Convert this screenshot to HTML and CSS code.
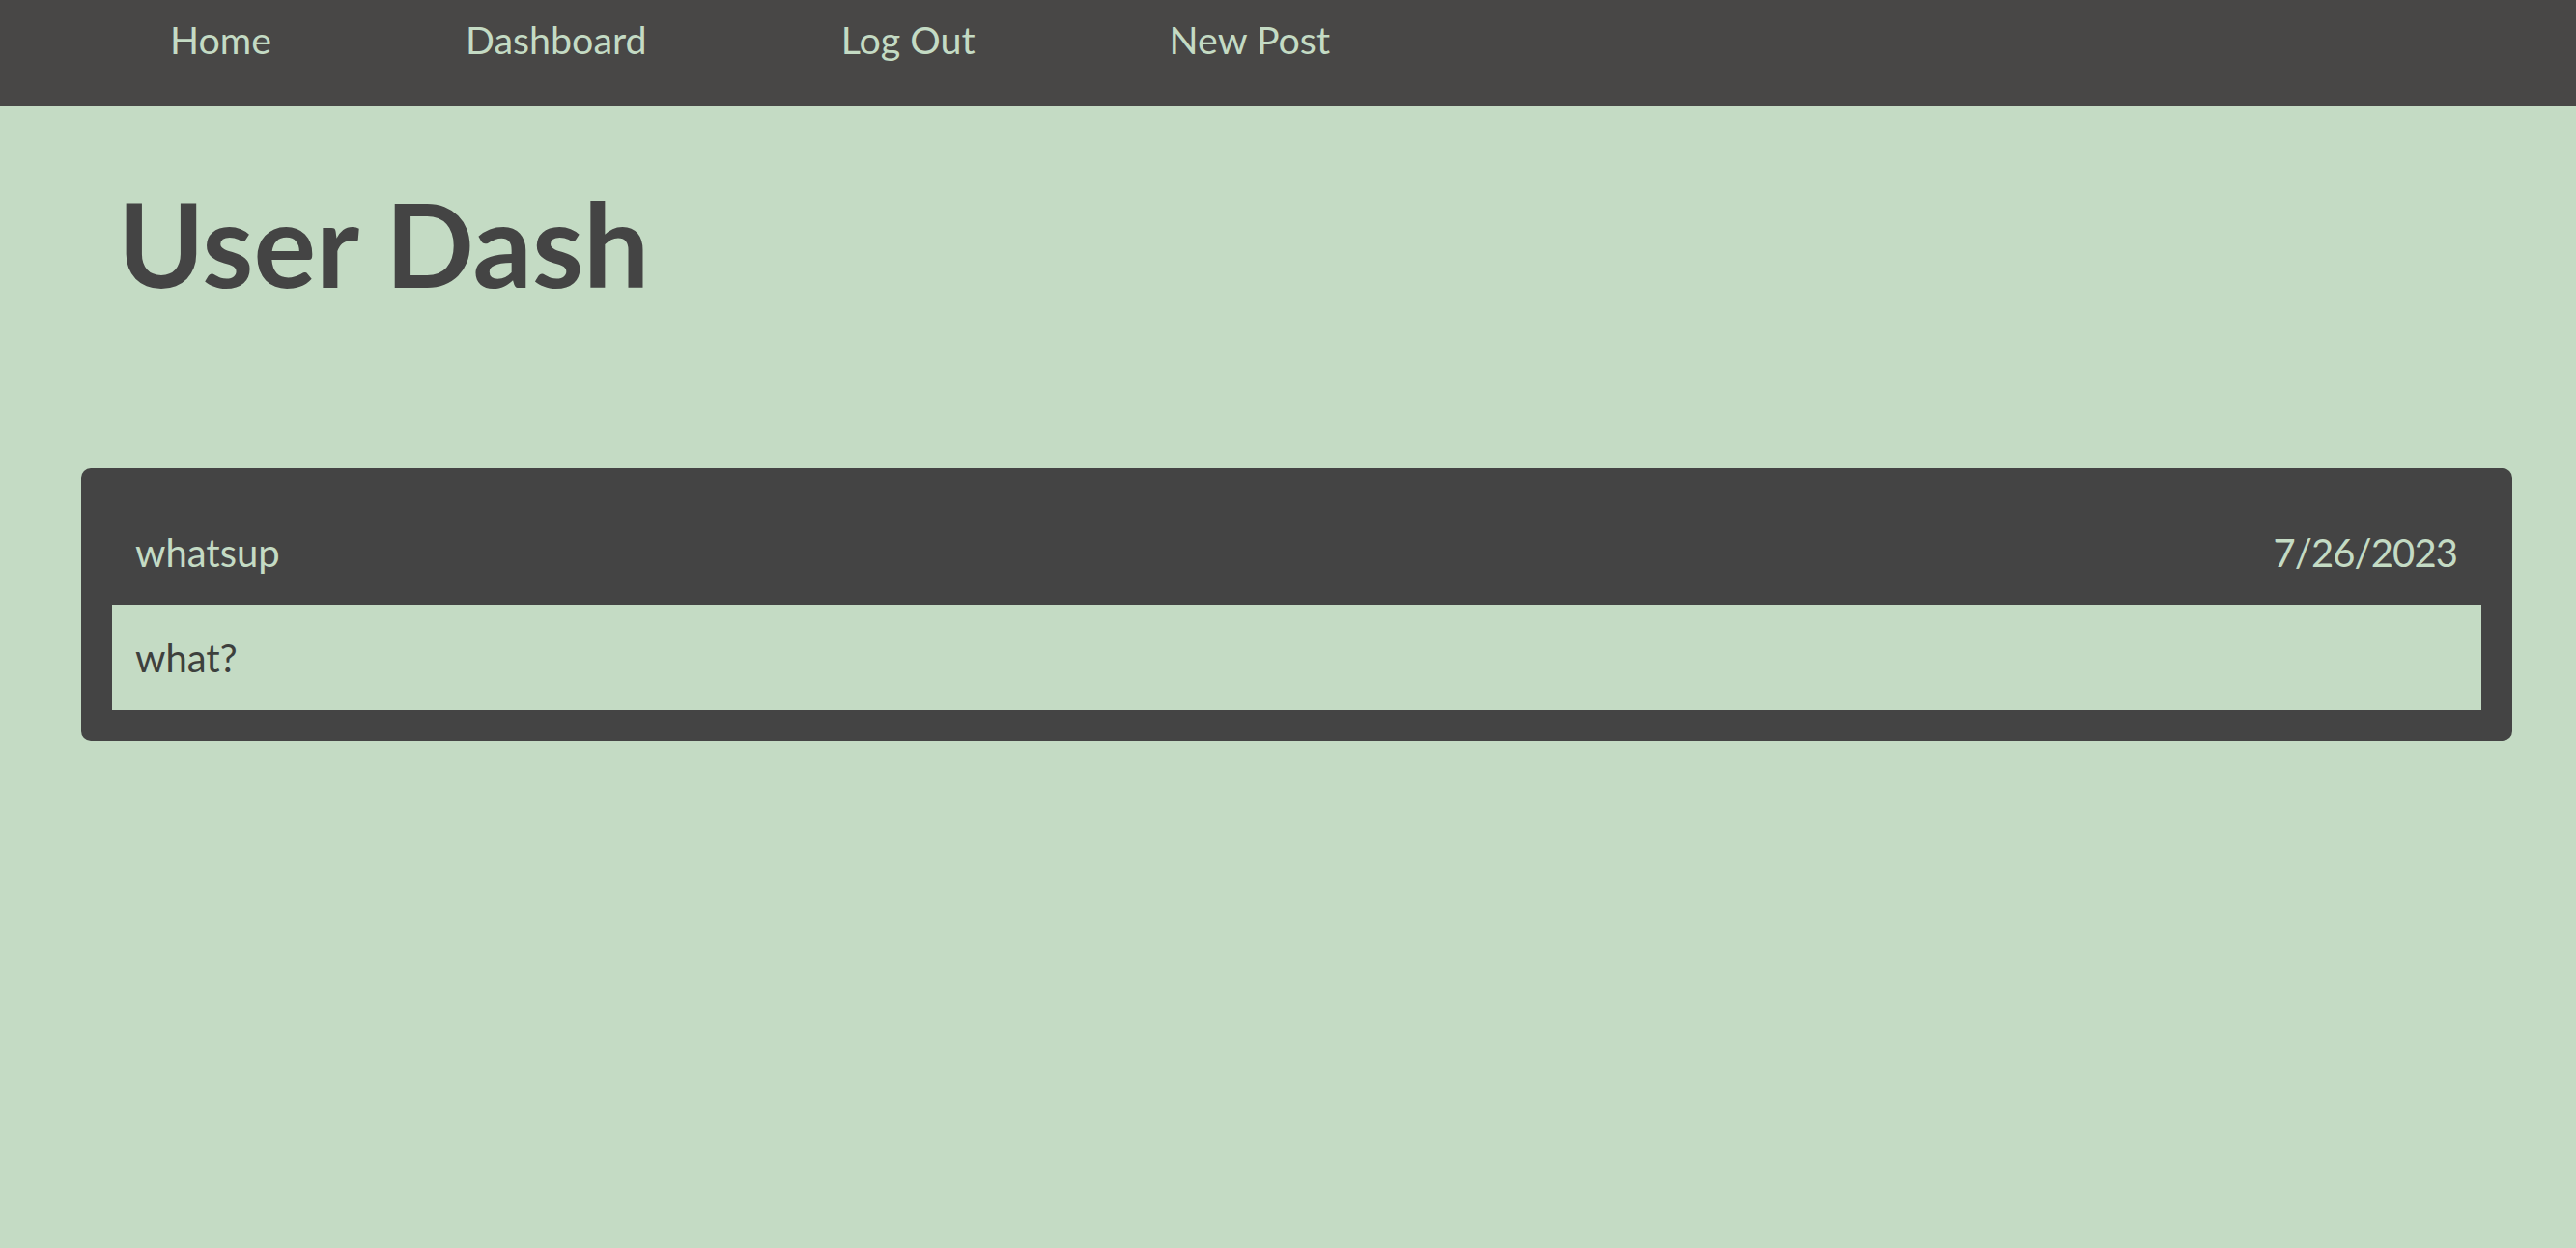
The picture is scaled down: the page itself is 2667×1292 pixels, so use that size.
FILE: index.html
```html
<!DOCTYPE html>
<html lang="en">
<head>
<meta charset="utf-8">
<title>User Dash</title>
<link rel="stylesheet" href="styles.css">
</head>
<body>
<nav class="topnav">
  <a class="navlink" href="#">Home</a>
  <a class="navlink" href="#">Dashboard</a>
  <a class="navlink" href="#">Log Out</a>
  <a class="navlink" href="#">New Post</a>
</nav>
<main class="content">
  <h1 class="title">User Dash</h1>
  <section class="post">
    <div class="post-inner">
      <header class="post-head">
        <span class="post-title">whatsup</span>
        <span class="post-date">7/26/2023</span>
      </header>
      <div class="post-body">what?</div>
    </div>
  </section>
</main>
</body>
</html>
```
FILE: styles.css
```css
html, body {
  margin: 0;
  padding: 0;
}
body {
  background: #c4dbc4;
  font-family: Lato, "Open Sans", sans-serif;
  min-height: 1292px;
}
.topnav {
  display: flex;
  height: 110px;
  box-sizing: border-box;
  padding: 17px 0 0 176px;
  gap: 201px;
  background: #484746;
}
.navlink {
  color: #c4dbc4;
  text-decoration: none;
  font-size: 39.4px;
  line-height: 48px;
}
.content {
  padding: 0 66px 0 84px;
}
.title {
  margin: 69px 0 0 38px;
  font-size: 121px;
  font-weight: 700;
  line-height: 146px;
  color: #444444;
}
.post {
  margin-top: 160px;
  background: #444444;
  border-radius: 10px;
  padding: 32px;
}
.post-inner {
  display: flex;
  flex-direction: column;
}
.post-head {
  display: flex;
  justify-content: space-between;
  padding: 30px 24px 28px 24px;
  color: #c4dbc4;
  font-size: 40px;
  line-height: 51px;
}
.post-date {
  letter-spacing: -0.9px;
  margin-right: 1px;
}
.post-body {
  background: #c4dbc4;
  color: #3d403d;
  padding: 30px 24px 28px;
  font-size: 40px;
  line-height: 51px;
}
```
